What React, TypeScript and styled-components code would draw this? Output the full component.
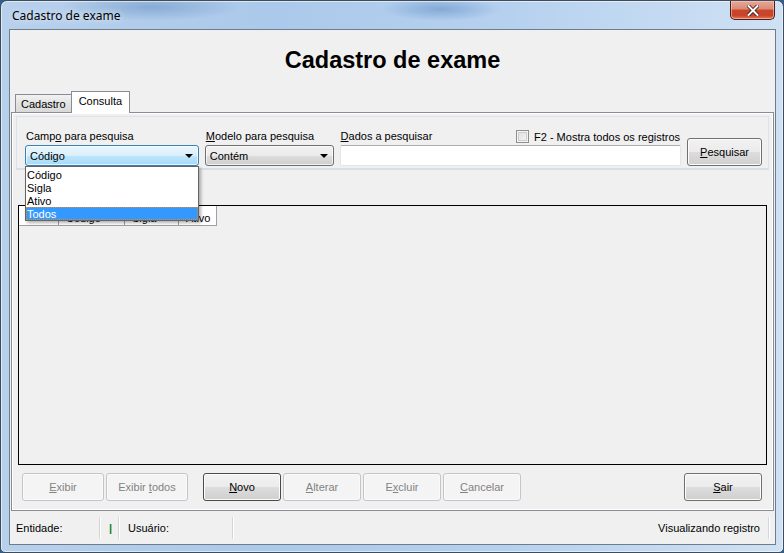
import React from 'react';
import styled, { createGlobalStyle, css } from 'styled-components';

const GlobalStyle = createGlobalStyle`
  html, body {
    margin: 0;
    padding: 0;
    background: #2f5f8c;
  }
  body {
    font-family: "Liberation Sans", Arial, sans-serif;
    font-size: 11px;
    color: #000;
  }
`;

const App: React.FC = () => {
  return (
    <>
      <GlobalStyle />
      <Window>
        <TitleBar>
          <Title>Cadastro de exame</Title>
          <CloseButton aria-label="Fechar">
            <svg width="12" height="11" viewBox="0 0 12 11">
              <path d="M1.5 1 L10.5 10 M10.5 1 L1.5 10" stroke="#3b1410" strokeWidth="3.6" strokeLinecap="square" />
              <path d="M1.5 1 L10.5 10 M10.5 1 L1.5 10" stroke="#ffffff" strokeWidth="2" strokeLinecap="square" />
            </svg>
          </CloseButton>
        </TitleBar>

        <Client>
          <Header>Cadastro de exame</Header>

          <TabStrip>
            <Tab>Cadastro</Tab>
            <Tab $active>Consulta</Tab>
          </TabStrip>

          <TabPage>
            <SearchPanel>
              <Field $width={174}>
                <Label>
                  Camp<u>o</u> para pesquisa
                </Label>
                <Combo $open>
                  <span>Código</span>
                  <Arrow />
                </Combo>
                <DropList>
                  <DropItem>Código</DropItem>
                  <DropItem>Sigla</DropItem>
                  <DropItem>Ativo</DropItem>
                  <DropItem $selected>Todos</DropItem>
                </DropList>
              </Field>

              <Field $width={129}>
                <Label>
                  <u>M</u>odelo para pesquisa
                </Label>
                <Combo>
                  <span>Contém</span>
                  <Arrow />
                </Combo>
              </Field>

              <Field $width={342}>
                <LabelRow>
                  <Label>
                    <u>D</u>ados a pesquisar
                  </Label>
                  <CheckLabel>
                    <CheckBox />
                    F2 - Mostra todos os registros
                  </CheckLabel>
                </LabelRow>
                <TextInput />
              </Field>

              <Button $width={75} $height={28}>
                <u>P</u>esquisar
              </Button>
            </SearchPanel>

            <GridArea>
              <Grid>
                <GridHeader>
                  <HeaderCell $width={40} />
                  <HeaderCell $width={66}>Código</HeaderCell>
                  <HeaderCell $width={54}>Sigla</HeaderCell>
                  <HeaderCell $width={38}>Ativo</HeaderCell>
                </GridHeader>
              </Grid>
            </GridArea>

            <ButtonBar>
              <ButtonGroup>
                <Button $width={82} disabled>
                  <u>E</u>xibir
                </Button>
                <Button $width={82} disabled>
                  Exibir <u>t</u>odos
                </Button>
              </ButtonGroup>
              <ButtonGroup>
                <Button $width={78} $focused>
                  <u>N</u>ovo
                </Button>
                <Button $width={78} disabled>
                  <u>A</u>lterar
                </Button>
                <Button $width={78} disabled>
                  E<u>x</u>cluir
                </Button>
                <Button $width={78} disabled>
                  <u>C</u>ancelar
                </Button>
              </ButtonGroup>
              <Spacer />
              <Button $width={78}>
                <u>S</u>air
              </Button>
            </ButtonBar>
          </TabPage>

          <StatusBar>
            <StatusCell $width={90} $pad={6}>Entidade:</StatusCell>
            <StatusCell $width={19} $pad={9}>
              <GreenBar>|</GreenBar>
            </StatusCell>
            <StatusCell $width={114} $pad={9}>Usuário:</StatusCell>
            <Spacer />
            <StatusCell $pad={0} $right>Visualizando registro</StatusCell>
          </StatusBar>
        </Client>
      </Window>
    </>
  );
};

export default App;

const Window = styled.div`
  width: 784px;
  height: 553px;
  box-sizing: border-box;
  display: flex;
  flex-direction: column;
  padding: 0 7px 7px 8px;
  border: 1px solid #3e4c5c;
  border-radius: 7px 7px 5px 5px;
  background:
    radial-gradient(ellipse 90px 14px at 150px 6px, rgba(60, 110, 170, 0.35), transparent),
    radial-gradient(ellipse 60px 12px at 440px 8px, rgba(40, 100, 170, 0.35), transparent),
    linear-gradient(90deg, #b7d0ec 0%, #abc9ea 35%, #b6d1ef 65%, #cfe1f4 100%);
  box-shadow: inset 0 0 0 1px rgba(255, 255, 255, 0.55);
`;

const TitleBar = styled.div`
  height: 28px;
  display: flex;
  align-items: flex-start;
`;

const Title = styled.div`
  padding: 8px 0 0 3px;
  font-family: "Noto Sans", "Liberation Sans", sans-serif;
  font-size: 12px;
  line-height: 14px;
  color: #000;
  text-shadow: 0 0 6px rgba(255, 255, 255, 0.9);
`;

const CloseButton = styled.div`
  margin-left: auto;
  margin-right: 1px;
  width: 45px;
  height: 19px;
  box-sizing: border-box;
  display: flex;
  align-items: center;
  justify-content: center;
  border: 1px solid #4d1c12;
  border-top: none;
  border-radius: 0 0 5px 5px;
  background: linear-gradient(#e8a796 0%, #d98a76 45%, #c8452c 50%, #c9432a 80%, #e07a5c 100%);
  box-shadow: inset 0 0 0 1px rgba(255, 210, 200, 0.55);
`;

const Client = styled.div`
  flex: 1;
  display: flex;
  flex-direction: column;
  border: 1px solid #6f7d8b;
  background: #f0f0f0;
`;

const Header = styled.div`
  height: 61px;
  display: flex;
  align-items: center;
  justify-content: center;
  font-size: 23.5px;
  font-weight: bold;
`;

const TabStrip = styled.div`
  height: 21px;
  display: flex;
  align-items: flex-end;
  padding-left: 5px;
`;

const Tab = styled.div<{ $active?: boolean }>`
  box-sizing: border-box;
  height: 18px;
  padding: 0 5px;
  display: flex;
  align-items: center;
  border: 1px solid #898c95;
  border-bottom: none;
  background: linear-gradient(#f2f2f2, #e3e3e3 50%, #d9d9d9);
  color: #000;
  ${p =>
    p.$active &&
    css`
      position: relative;
      z-index: 1;
      height: 22px;
      margin-bottom: -1px;
      margin-left: -1px;
      padding: 0 7px 3px 7px;
      background: #ffffff;
    `}
`;

const TabPage = styled.div`
  height: 399px;
  box-sizing: border-box;
  margin: 0 1px;
  border: 1px solid #898c95;
  background: #f0f0f0;
  padding: 3px 4px 0 4px;
  display: flex;
  flex-direction: column;
  box-shadow: inset 0 0 0 1px #ffffff;
`;

const SearchPanel = styled.div`
  height: 54px;
  box-sizing: border-box;
  display: flex;
  align-items: flex-end;
  gap: 6px;
  padding: 0 6px 2px 8px;
  border: 1px solid #dde3e9;
  border-bottom: 2px solid #d7dee6;
`;

const Field = styled.div<{ $width: number }>`
  position: relative;
  width: ${p => p.$width}px;
  display: flex;
  flex-direction: column;
`;

const LabelRow = styled.div`
  display: flex;
  justify-content: space-between;
  align-items: center;
`;

const Label = styled.div`
  height: 13px;
  line-height: 13px;
  margin: 0 0 2px 1px;
  white-space: nowrap;
`;

const CheckLabel = styled.div`
  display: flex;
  align-items: center;
  gap: 5px;
  height: 13px;
  margin: 0 1px 2px 0;
  white-space: nowrap;
`;

const CheckBox = styled.span`
  width: 13px;
  height: 13px;
  box-sizing: border-box;
  border: 1px solid #8f8f8f;
  background: linear-gradient(135deg, #dcdcdc, #f7f7f7);
  box-shadow: inset 0 0 0 1px #f4f4f4, inset 0 0 0 2px #cfcfcf;
`;

const Combo = styled.div<{ $open?: boolean }>`
  height: 21px;
  box-sizing: border-box;
  display: flex;
  align-items: center;
  justify-content: space-between;
  padding: 0 5px 0 4px;
  border: 1px solid #707070;
  border-radius: 3px;
  background: linear-gradient(#f2f2f2 0%, #ebebeb 50%, #dddddd 51%, #cfcfcf 100%);
  box-shadow: inset 0 0 0 1px rgba(255, 255, 255, 0.7);
  ${p =>
    p.$open &&
    css`
      border-color: #3c7fb1;
      background: linear-gradient(#eaf6fd 0%, #d9f0fc 50%, #bee6fd 51%, #a7d9f5 100%);
    `}
`;

const Arrow = styled.span`
  width: 0;
  height: 0;
  border-left: 4px solid transparent;
  border-right: 4px solid transparent;
  border-top: 4px solid #000;
`;

const DropList = styled.div`
  position: absolute;
  top: 100%;
  left: 0;
  width: 174px;
  box-sizing: border-box;
  z-index: 5;
  padding-top: 1px;
  background: #ffffff;
  border: 1px solid #646464;
  box-shadow: 2px 2px 3px rgba(0, 0, 0, 0.3);
`;

const DropItem = styled.div<{ $selected?: boolean }>`
  height: 13px;
  line-height: 14px;
  padding-left: 1px;
  box-sizing: border-box;
  ${p =>
    p.$selected &&
    css`
      background: #3399ff;
      color: #ffffff;
      outline: 1px dotted #e08a2a;
      outline-offset: -1px;
    `}
`;

const TextInput = styled.div`
  height: 21px;
  box-sizing: border-box;
  background: #ffffff;
  border: 1px solid #e2e6eb;
  border-top-color: #abadb3;
  border-radius: 2px;
`;

const Button = styled.button<{ $width: number; $height?: number; $focused?: boolean }>`
  width: ${p => p.$width}px;
  height: ${p => p.$height ?? 28}px;
  box-sizing: border-box;
  padding: 0;
  font-family: "Liberation Sans", Arial, sans-serif;
  font-size: 11px;
  color: #000;
  border: 1px solid #707070;
  border-radius: 3px;
  background: linear-gradient(#f2f2f2 0%, #ebebeb 50%, #dddddd 51%, #cfcfcf 100%);
  box-shadow: inset 0 0 0 1px #fcfcfc;
  ${p =>
    p.$focused &&
    css`
      border-color: #4a4a4a;
    `}
  &:disabled {
    color: #838383;
    border-color: #c3c6c9;
    background: #f4f4f4;
    box-shadow: inset 0 0 0 1px #fafafa;
  }
`;

const GridArea = styled.div`
  padding: 35px 2px 0 2px;
`;

const Grid = styled.div`
  height: 260px;
  box-sizing: border-box;
  border: 1px solid #000;
  background: #f0f0f0;
`;

const GridHeader = styled.div`
  display: flex;
  height: 20px;
`;

const HeaderCell = styled.div<{ $width: number }>`
  width: ${p => p.$width}px;
  box-sizing: border-box;
  padding: 6px 0 0 7px;
  background: #ffffff;
  border-right: 1px solid #a0a0a0;
  border-bottom: 1px solid #a0a0a0;
`;

const ButtonBar = styled.div`
  flex: 1;
  display: flex;
  align-items: flex-start;
  gap: 15px;
  padding: 8px 7px 0 6px;
  box-shadow: inset 0 -1px 0 #ffffff;
`;

const ButtonGroup = styled.div`
  display: flex;
  gap: 2px;
`;

const Spacer = styled.div`
  flex: 1;
`;

const StatusBar = styled.div`
  flex: 1;
  display: flex;
  align-items: center;
  padding-right: 6px;
`;

const StatusCell = styled.div<{ $width?: number; $pad: number; $right?: boolean }>`
  ${p => (p.$width ? `width: ${p.$width}px;` : '')}
  height: 22px;
  box-sizing: border-box;
  display: flex;
  align-items: center;
  padding-left: ${p => p.$pad}px;
  padding-right: ${p => (p.$right ? 8 : 0)}px;
  border-right: 1px solid #d5d5d5;
  box-shadow: 1px 0 0 #ffffff;
  white-space: nowrap;
`;

const GreenBar = styled.span`
  color: #1a7a1a;
  font-weight: bold;
`;
